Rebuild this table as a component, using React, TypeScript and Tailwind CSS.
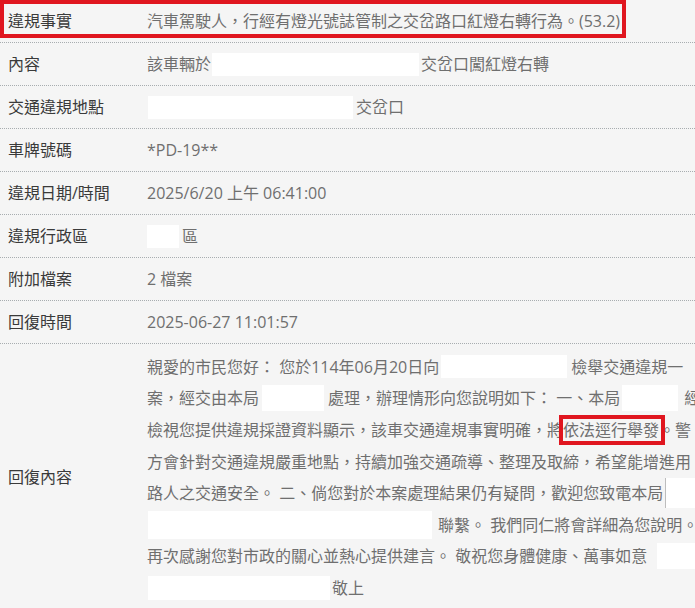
import React from "react";

const Blank = ({ w, h = "h-[23px]", extra = "" }: { w: string; h?: string; extra?: string }) => (
	<span className={`inline-block bg-white align-middle ${w} ${h} ${extra}`} />
);

function Row({ label, children, first }: { label: string; children: React.ReactNode; first?: boolean }) {
	return (
		<div className="relative flex h-[43px] items-center border-b border-dotted border-[#a8adb0]">
			{first && <div className="absolute left-0 top-0 w-[626px] h-[38px] border-4 border-[#e0161f]" />}
			<div className="w-[147px] shrink-0 pl-[8px] text-[#3a3a3a]">{label}</div>
			<div className="flex items-center whitespace-nowrap text-[#6f6f6f]">{children}</div>
		</div>
	);
}

const Line = ({ children }: { children: React.ReactNode }) => (
	<div className="flex h-[31.6px] items-center whitespace-nowrap">{children}</div>
);

export default function App() {
	return (
		<div
			className="w-[695px] h-[608px] overflow-hidden bg-[#f5f5f5] text-[16px]"
			style={{ fontFamily: '"Open Sans", "Noto Sans CJK TC", sans-serif' }}
		>
			<Row label="違規事實" first>
				汽車駕駛人，行經有燈光號誌管制之交岔路口紅燈右轉行為。(53.2)
			</Row>
			<Row label="內容">
				該車輛於
				<Blank w="w-[207px]" extra="ml-[1px] mr-[2px]" />
				交岔口闖紅燈右轉
			</Row>
			<Row label="交通違規地點">
				<Blank w="w-[205px]" extra="ml-[1px] mr-[3px]" />
				交岔口
			</Row>
			<Row label="車牌號碼">*PD-19**</Row>
			<Row label="違規日期/時間">2025/6/20 上午 06:41:00</Row>
			<Row label="違規行政區">
				<Blank w="w-[32px]" extra="mr-[3px]" />
				區
			</Row>
			<Row label="附加檔案">2 檔案</Row>
			<Row label="回復時間">2025-06-27 11:01:57</Row>
			<div className="flex h-[265px] items-center">
				<div className="w-[147px] shrink-0 pl-[8px] text-[#3a3a3a]">回復內容</div>
				<div className="self-start pt-[7px] text-[#6f6f6f]">
					<Line>
						親愛的市民您好： 您於114年06月20日向
						<Blank w="w-[126px]" extra="ml-[2px] mr-[4px]" />
						檢舉交通違規一
					</Line>
					<Line>
						案，經交由本局
						<Blank w="w-[62px]" h="h-[26px]" extra="ml-[3px] mr-[4px]" />
						處理，辦理情形向您說明如下： 一、本局
						<Blank w="w-[56px]" h="h-[26px]" extra="ml-[2px] mr-[6px]" />
						經
					</Line>
					<Line>
						檢視您提供違規採證資料顯示，該車交通違規事實明確，將
						<span className="relative inline-block leading-[22px]">
							依法逕行舉發
							<span className="absolute -left-[4px] -right-[6px] -top-[4px] -bottom-[4px] border-4 border-[#e0161f]" />
						</span>
						。警
					</Line>
					<Line>方會針對交通違規嚴重地點，持續加強交通疏導、整理及取締，希望能增進用</Line>
					<Line>
						路人之交通安全。 二、倘您對於本案處理結果仍有疑問，歡迎您致電本局
						<Blank w="w-[40px]" h="h-[30px]" extra="ml-[2px] border-l border-[#bdbdbd]" />
					</Line>
					<Line>
						<Blank w="w-[284px]" h="h-[28px]" extra="ml-[1px] mr-[6px]" />
						聯繫。 我們同仁將會詳細為您說明。
					</Line>
					<Line>
						再次感謝您對市政的關心並熱心提供建言。 敬祝您身體健康、萬事如意
						<Blank w="w-[44px]" h="h-[26px]" extra="ml-[10px]" />
					</Line>
					<Line>
						<Blank w="w-[182px]" h="h-[24px]" extra="ml-[1px] mr-[2px]" />
						敬上
					</Line>
				</div>
			</div>
		</div>
	);
}
